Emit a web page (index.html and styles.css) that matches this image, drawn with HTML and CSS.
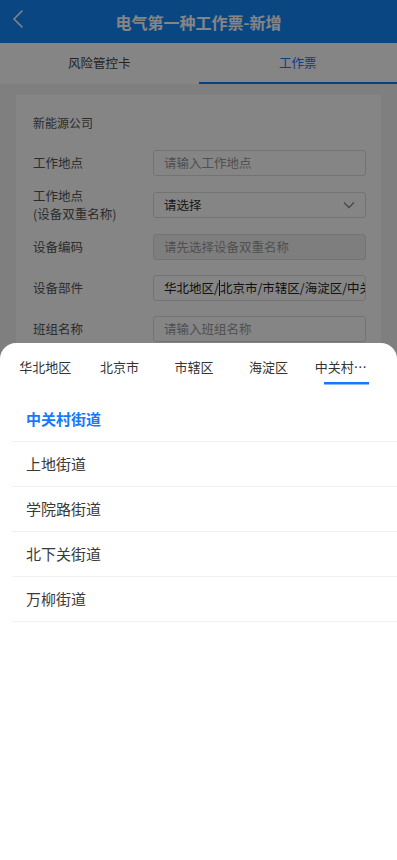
FILE: index.html
```html
<!DOCTYPE html>
<html lang="zh-CN">
<head>
    <meta charset="UTF-8" />
    <meta name="viewport" content="width=device-width, initial-scale=1.0" />
    <title>电气第一种工作票-新增</title>
    <link rel="stylesheet" href="styles.css">
</head>
<body>
    <header class="navbar">
        <svg class="back" width="12" height="20" viewBox="0 0 12 20"><path d="M10 2 L2 10 L10 18" fill="none" stroke="#fff" stroke-width="1.6" stroke-linecap="round" stroke-linejoin="round"/></svg>
        <h1>电气第一种工作票-新增</h1>
    </header>

    <nav class="tabs">
        <div class="tab">风险管控卡</div>
        <div class="tab active">工作票</div>
    </nav>

    <main class="page">
        <section class="card">
            <p class="company">新能源公司</p>

            <div class="row">
                <label>工作地点</label>
                <div class="field placeholder">请输入工作地点</div>
            </div>
            <div class="row tall">
                <label>工作地点<br>(设备双重名称)</label>
                <div class="field select">
                    <span>请选择</span>
                    <svg width="12" height="8" viewBox="0 0 12 8"><path d="M1 1.5 L6 6.5 L11 1.5" fill="none" stroke="#888" stroke-width="1.3"/></svg>
                </div>
            </div>
            <div class="row">
                <label>设备编码</label>
                <div class="field placeholder disabled">请先选择设备双重名称</div>
            </div>
            <div class="row">
                <label>设备部件</label>
                <div class="field value">华北地区/<span class="caret"></span>北京市/市辖区/海淀区/中关村街道</div>
            </div>
            <div class="row">
                <label>班组名称</label>
                <div class="field placeholder">请输入班组名称</div>
            </div>
        </section>
    </main>

    <div class="mask"></div>

    <div class="sheet">
        <div class="sheet-tabs">
            <div class="sheet-tab">华北地区</div>
            <div class="sheet-tab">北京市</div>
            <div class="sheet-tab">市辖区</div>
            <div class="sheet-tab">海淀区</div>
            <div class="sheet-tab current"><span>中关村街道</span></div>
        </div>
        <ul class="options">
            <li class="selected">中关村街道</li>
            <li>上地街道</li>
            <li>学院路街道</li>
            <li>北下关街道</li>
            <li>万柳街道</li>
        </ul>
    </div>
</body>
</html>
```

FILE: styles.css
```css
body {
    margin: 0;
    font-family: "Noto Sans CJK SC", "Noto Sans", sans-serif;
    background: #f4f4f4;
    color: #333;
    height: 860px;
    overflow: hidden;
}
.navbar {
    height: 43px;
    background: #1588fa;
    display: flex;
    align-items: center;
    justify-content: center;
    position: relative;
}
.navbar h1 {
    margin: 0;
    font-size: 16px;
    font-weight: 700;
    color: #fff;
}
.back {
    position: absolute;
    left: 12px;
    top: 9px;
}
.tabs {
    display: flex;
    height: 41px;
    background: #fff;
}
.tab {
    flex: 1;
    display: flex;
    align-items: center;
    justify-content: center;
    font-size: 12.5px;
    color: #444;
    border-bottom: 2px solid transparent;
}
.tab.active {
    color: #1677ff;
    border-bottom-color: #1677ff;
}
.page {
    padding: 11px 16px;
}
.card {
    background: #fff;
    padding: 18px 15px 20px 17px;
}
.company {
    margin: 0 0 17px;
    font-size: 12px;
    color: #555;
    line-height: 20px;
}
.row {
    display: flex;
    align-items: center;
    min-height: 26px;
    margin-bottom: 15px;
}
.row.tall {
    margin-top: -4px;
    margin-bottom: 11px;
}
.row label {
    width: 120px;
    font-size: 12.5px;
    color: #555;
    line-height: 18px;
}
.field {
    flex: 1;
    height: 26px;
    box-sizing: border-box;
    border: 1px solid #dcdcdc;
    border-radius: 3px;
    padding: 0 10px;
    font-size: 12.5px;
    line-height: 24px;
    white-space: nowrap;
    overflow: hidden;
}
.placeholder { color: #999; }
.disabled { background: #f2f2f2; }
.value { color: #222; }
.select {
    display: flex;
    align-items: center;
    justify-content: space-between;
    color: #333;
}
.caret {
    display: inline-block;
    width: 1px;
    height: 16px;
    background: #222;
    vertical-align: -3px;
}
.mask {
    position: fixed;
    inset: 0;
    background: rgba(0, 0, 0, 0.48);
}
.sheet {
    position: fixed;
    left: 0;
    right: 0;
    top: 343px;
    bottom: 0;
    background: #fff;
    border-radius: 16px 16px 0 0;
}
.sheet-tabs {
    display: flex;
    padding: 0 8px;
    height: 47px;
}
.sheet-tab {
    flex: 1;
    min-width: 0;
    display: flex;
    align-items: center;
    justify-content: center;
    font-size: 13px;
    color: #333;
}
.sheet-tab.current {
    justify-content: flex-start;
    padding-left: 9px;
    background: linear-gradient(#1677ff, #1677ff) no-repeat 18px 39px / 45px 2.5px;
}
.sheet-tab.current span {
    max-width: 54px;
    overflow: hidden;
    text-overflow: ellipsis;
    white-space: nowrap;
}
.options {
    list-style: none;
    margin: 7px 0 0 12px;
    padding: 0;
}
.options li {
    height: 44px;
    line-height: 44px;
    border-bottom: 1px solid #f0f0f0;
    padding-left: 14px;
    font-size: 15px;
    color: #3a3a3a;
}
.options li.selected {
    color: #1677ff;
    font-weight: 700;
}
```
